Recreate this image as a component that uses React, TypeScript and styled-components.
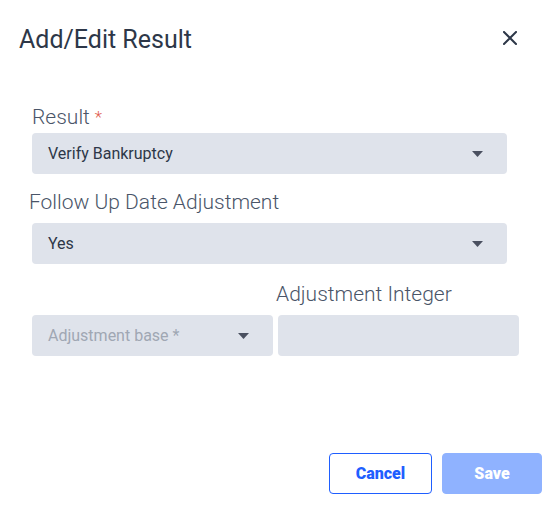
import React from "react";
import styled, { createGlobalStyle } from "styled-components";

const Global = createGlobalStyle`
  html, body { margin: 0; padding: 0; background: #ffffff; }
  body { font-family: Roboto, "Liberation Sans", Arial, sans-serif; }
  * { box-sizing: border-box; }
`;

const Dialog = styled.div`
  width: 551px;
  height: 531px;
  background: #ffffff;
  display: flex;
  flex-direction: column;
`;

const Header = styled.div`
  display: flex;
  align-items: center;
  justify-content: space-between;
  padding: 25px 34px 0 19px;
`;

const Title = styled.h2`
  margin: 0;
  font-size: 25px;
  font-weight: 400;
  line-height: 30px;
  color: #2d3748;
`;

const CloseButton = styled.button`
  border: none;
  background: none;
  padding: 0;
  width: 14px;
  height: 14px;
  display: flex;
  cursor: pointer;
  margin-bottom: 4px;
`;

const Body = styled.div`
  display: flex;
  flex-direction: column;
  padding: 50px 44px 0 32px;
`;

const Field = styled.div<{ $gap?: number }>`
  display: flex;
  flex-direction: column;
  margin-bottom: ${(p) => p.$gap ?? 0}px;
`;

const Label = styled.label<{ $shift?: number; $space?: number }>`
  font-size: 21px;
  font-weight: 300;
  line-height: 25px;
  color: #4a5568;
  margin-left: ${(p) => p.$shift ?? 0}px;
  margin-bottom: ${(p) => p.$space ?? 8}px;
`;

const Required = styled.span`
  color: #e05a4a;
  font-size: 17px;
  margin-left: 5px;
  vertical-align: top;
`;

const Select = styled.div<{ $placeholder?: boolean }>`
  height: 41px;
  background: #dfe3eb;
  border-radius: 4px;
  display: flex;
  align-items: center;
  justify-content: space-between;
  padding: 0 24px 0 16px;
  font-size: 16px;
  color: ${(p) => (p.$placeholder ? "#a0a7b3" : "#2d3748")};
`;

const Row = styled.div`
  display: grid;
  grid-template-columns: 241px 241px;
  column-gap: 5px;
  margin-right: -12px;
  align-items: end;
`;

const InputBox = styled.div`
  height: 41px;
  background: #dfe3eb;
  border-radius: 4px;
`;

const Footer = styled.div`
  margin-top: auto;
  display: flex;
  justify-content: flex-end;
  gap: 10px;
  padding: 0 9px 37px 0;
`;

const Button = styled.button<{ $primary?: boolean }>`
  height: 41px;
  width: ${(p) => (p.$primary ? 100 : 103)}px;
  border-radius: 4px;
  font-family: Roboto, "Liberation Sans", Arial, sans-serif;
  font-size: 16px;
  font-weight: 900;
  cursor: pointer;
  border: 1px solid ${(p) => (p.$primary ? "#8fb2ff" : "#1f5eff")};
  background: ${(p) => (p.$primary ? "#8fb2ff" : "#ffffff")};
  color: ${(p) => (p.$primary ? "#ffffff" : "#1f5eff")};
`;

const Caret = () => (
  <svg width="11" height="6" viewBox="0 0 11 6">
    <path d="M0 0 L11 0 L5.5 6 Z" fill="#4a5060" />
  </svg>
);

export default function App() {
  return (
    <>
      <Global />
      <Dialog>
        <Header>
          <Title>Add/Edit Result</Title>
          <CloseButton aria-label="close">
            <svg width="14" height="14" viewBox="0 0 14 14">
              <path d="M1 1 L13 13 M13 1 L1 13" stroke="#2d3748" strokeWidth="2" strokeLinecap="square" />
            </svg>
          </CloseButton>
        </Header>
        <Body>
          <Field $gap={16}>
            <Label $space={3}>
              Result<Required>*</Required>
            </Label>
            <Select>
              Verify Bankruptcy
              <Caret />
            </Select>
          </Field>
          <Field $gap={18}>
            <Label $shift={-3}>Follow Up Date Adjustment</Label>
            <Select>
              Yes
              <Caret />
            </Select>
          </Field>
          <Row>
            <Select $placeholder>
              Adjustment base *
              <Caret />
            </Select>
            <Field>
              <Label $shift={-2}>Adjustment Integer</Label>
              <InputBox />
            </Field>
          </Row>
        </Body>
        <Footer>
          <Button>Cancel</Button>
          <Button $primary>Save</Button>
        </Footer>
      </Dialog>
    </>
  );
}
